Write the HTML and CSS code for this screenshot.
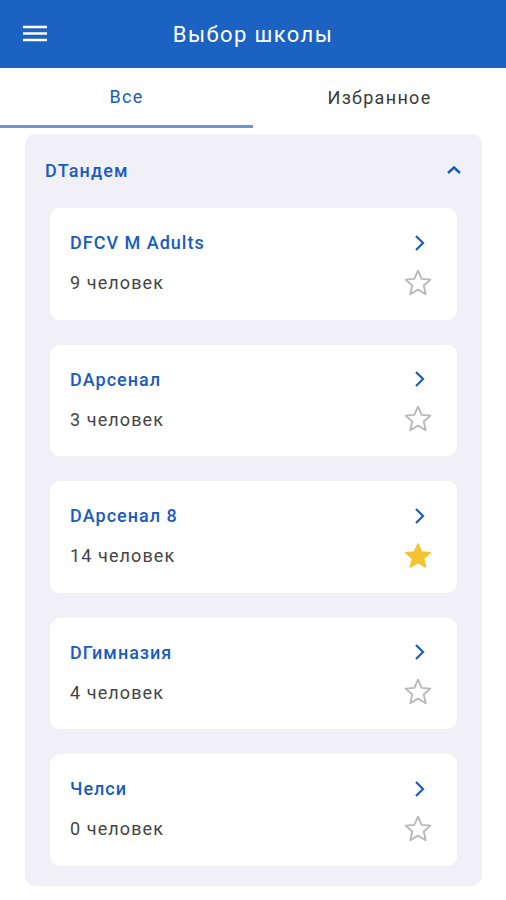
FILE: index.html
```html
<!DOCTYPE html>
<html lang="ru">
<head>
    <meta charset="UTF-8">
    <meta name="viewport" content="width=device-width, initial-scale=1.0">
    <title>Выбор школы</title>
    <link rel="stylesheet" href="styles.css">
</head>
<body>
    <!-- Top app bar -->
    <header class="app-bar">
        <svg class="menu-icon" width="24" height="24" viewBox="0 0 24 24">
            <path d="M0 5h24M0 11.5h24M0 18h24" stroke="#fff" stroke-width="2.6"/>
        </svg>
        <h1 class="app-title">Выбор школы</h1>
    </header>

    <!-- Tabs -->
    <nav class="tabs">
        <div class="tab active">Все</div>
        <div class="tab">Избранное</div>
    </nav>

    <!-- Group of schools -->
    <section class="group">
        <div class="group-head">
            <span class="group-name">DТандем</span>
            <svg width="16" height="10" viewBox="0 0 16 10">
                <path d="M2 8l6-5.5L14 8" fill="none" stroke="#1a5bbf" stroke-width="2.4"/>
            </svg>
        </div>

        <div class="card">
            <div class="card-row">
                <span class="card-title">DFCV M Adults</span>
                <svg class="chevron" width="14" height="18" viewBox="0 0 14 18"><path d="M4 2l7 7-7 7" fill="none" stroke="#1a5bbf" stroke-width="2.2"/></svg>
            </div>
            <div class="card-row">
                <span class="card-count">9 человек</span>
                <svg class="star" width="32" height="32" viewBox="0 0 24 24"><path d="M12 2.8l2.7 6.1 6.6.6-5 4.4 1.5 6.5L12 17l-5.8 3.4 1.5-6.5-5-4.4 6.6-.6z" fill="none" stroke="#b9b9bc" stroke-width="1.4" stroke-linejoin="round"/></svg>
            </div>
        </div>

        <div class="card">
            <div class="card-row">
                <span class="card-title">DАрсенал</span>
                <svg class="chevron" width="14" height="18" viewBox="0 0 14 18"><path d="M4 2l7 7-7 7" fill="none" stroke="#1a5bbf" stroke-width="2.2"/></svg>
            </div>
            <div class="card-row">
                <span class="card-count">3 человек</span>
                <svg class="star" width="32" height="32" viewBox="0 0 24 24"><path d="M12 2.8l2.7 6.1 6.6.6-5 4.4 1.5 6.5L12 17l-5.8 3.4 1.5-6.5-5-4.4 6.6-.6z" fill="none" stroke="#b9b9bc" stroke-width="1.4" stroke-linejoin="round"/></svg>
            </div>
        </div>

        <div class="card">
            <div class="card-row">
                <span class="card-title">DАрсенал 8</span>
                <svg class="chevron" width="14" height="18" viewBox="0 0 14 18"><path d="M4 2l7 7-7 7" fill="none" stroke="#1a5bbf" stroke-width="2.2"/></svg>
            </div>
            <div class="card-row">
                <span class="card-count">14 человек</span>
                <svg class="star" width="32" height="32" viewBox="0 0 24 24"><path d="M12 2.8l2.7 6.1 6.6.6-5 4.4 1.5 6.5L12 17l-5.8 3.4 1.5-6.5-5-4.4 6.6-.6z" fill="#f4c430" stroke="#f4c430" stroke-width="1" stroke-linejoin="round"/></svg>
            </div>
        </div>

        <div class="card">
            <div class="card-row">
                <span class="card-title">DГимназия</span>
                <svg class="chevron" width="14" height="18" viewBox="0 0 14 18"><path d="M4 2l7 7-7 7" fill="none" stroke="#1a5bbf" stroke-width="2.2"/></svg>
            </div>
            <div class="card-row">
                <span class="card-count">4 человек</span>
                <svg class="star" width="32" height="32" viewBox="0 0 24 24"><path d="M12 2.8l2.7 6.1 6.6.6-5 4.4 1.5 6.5L12 17l-5.8 3.4 1.5-6.5-5-4.4 6.6-.6z" fill="none" stroke="#b9b9bc" stroke-width="1.4" stroke-linejoin="round"/></svg>
            </div>
        </div>

        <div class="card">
            <div class="card-row">
                <span class="card-title">Челси</span>
                <svg class="chevron" width="14" height="18" viewBox="0 0 14 18"><path d="M4 2l7 7-7 7" fill="none" stroke="#1a5bbf" stroke-width="2.2"/></svg>
            </div>
            <div class="card-row">
                <span class="card-count">0 человек</span>
                <svg class="star" width="32" height="32" viewBox="0 0 24 24"><path d="M12 2.8l2.7 6.1 6.6.6-5 4.4 1.5 6.5L12 17l-5.8 3.4 1.5-6.5-5-4.4 6.6-.6z" fill="none" stroke="#b9b9bc" stroke-width="1.4" stroke-linejoin="round"/></svg>
            </div>
        </div>
    </section>
</body>
</html>
```

FILE: styles.css
```css
/* General body styles */
body {
    font-family: Roboto, "Noto Sans", sans-serif;
    background: #ffffff;
    margin: 0;
    padding: 0;
}

/* Top app bar */
.app-bar {
    height: 68px;
    background: #1b62c3;
    display: flex;
    align-items: center;
    padding-left: 23px;
}

.app-title {
    flex: 1;
    margin: 0 0 0 -47px; /* keeps the title centred on the page */
    text-align: center;
    font-size: 22px;
    font-weight: 400;
    letter-spacing: 1.4px;
    color: #ffffff;
}

/* Tabs */
.tabs {
    display: flex;
    height: 60px;
}

.tab {
    flex: 1;
    display: flex;
    align-items: center;
    justify-content: center;
    font-size: 18px;
    letter-spacing: 1.3px;
    color: #3a3a3a;
    padding-bottom: 2px;
}

.tab.active {
    color: #1a5bbf;
    border-bottom: 3px solid #6f94d0;
    padding-bottom: 0;
}

/* School group container */
.group {
    margin: 6px 24px 14px 25px;
    background: #f0f0f6;
    border-radius: 10px;
    padding: 0 25px 20px;
}

.group-head {
    height: 74px;
    display: flex;
    align-items: center;
    justify-content: space-between;
    margin: 0 -5px;
    padding-bottom: 2px;
    box-sizing: border-box;
}

.group-name {
    font-size: 18px;
    font-weight: 500;
    letter-spacing: 1.1px;
    color: #1a5bbf;
}

/* School card */
.card {
    background: #ffffff;
    border-radius: 10px;
    height: 111.5px;
    margin-bottom: 25px;
    padding: 0 23px 2px 20px;
    box-sizing: border-box;
    display: flex;
    flex-direction: column;
    justify-content: center;
    gap: 10px;
}

.card:last-child {
    margin-bottom: 0;
}

.card-row {
    display: flex;
    align-items: center;
    justify-content: space-between;
    height: 30px;
}

.card-title {
    font-size: 18px;
    font-weight: 500;
    letter-spacing: 1px;
    color: #1a5bbf;
}

.card-count {
    font-size: 18px;
    letter-spacing: 1.1px;
    color: #444444;
}

.chevron {
    margin-right: 8px;
}
```
